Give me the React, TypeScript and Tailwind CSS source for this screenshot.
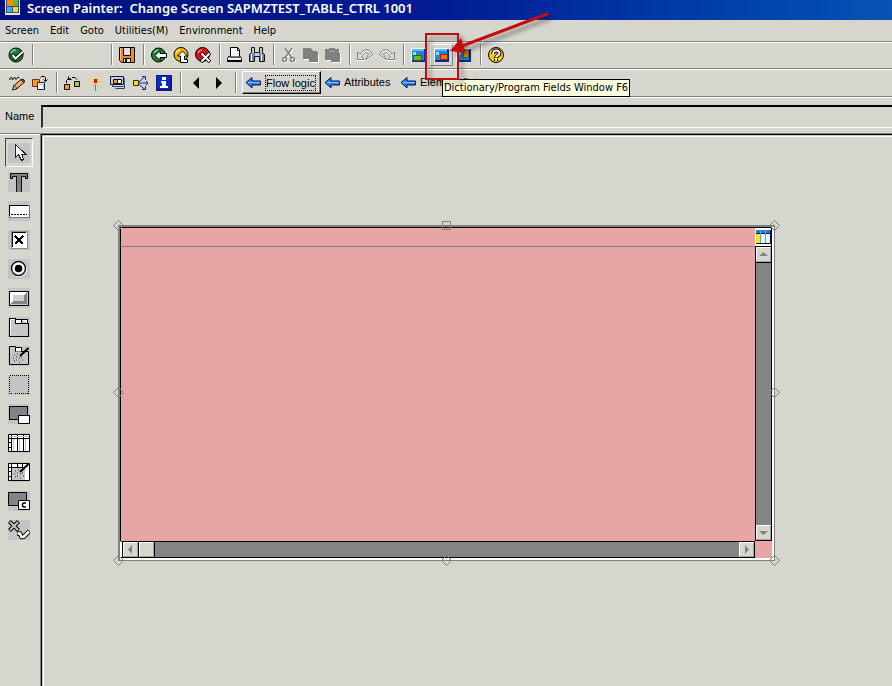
import type { ReactNode } from "react";

const tahoma = "font-['DejaVu_Sans_Condensed','Noto_Sans',sans-serif]";
const sans = "font-['Liberation_Sans',Arial,sans-serif]";

function Icon({ children, smooth = false }: { children: ReactNode; smooth?: boolean }) {
  return (
    <svg width="16" height="16" viewBox="0 0 16 16" fill="none" shapeRendering={smooth ? "auto" : "crispEdges"} className="shrink-0" aria-hidden="true">
      {children}
    </svg>
  );
}

function ToolButton({ label, wide = false, hot = false, children }: { label: string; wide?: boolean; hot?: boolean; children: ReactNode }) {
  const width = wide ? "w-[23px]" : "w-[22px]";
  const edge = hot ? "border border-t-white border-l-white border-r-[#808080] border-b-[#808080]" : "";
  return (
    <button type="button" aria-label={label} className={`flex h-[22px] shrink-0 items-center justify-center ${width} ${edge}`}>
      {children}
    </button>
  );
}

function Separator({ tight = false }: { tight?: boolean }) {
  return (
    <div
      className={`ml-[5px] h-[21px] w-[2px] shrink-0 border-r border-l border-l-[#808080] border-r-white ${tight ? "mr-[2px]" : "mr-[3px]"}`}
    />
  );
}

const Check = () => (
  <Icon smooth>
    <circle cx="8" cy="8" r="7" fill="#18803a" stroke="#000" />
    <path d="M3 6a5 5 0 0 1 5-3" stroke="#7fd08c" strokeWidth="1.5" />
    <path d="M4 7.500l3.500 4L14.500 5" stroke="#000" strokeWidth="4" />
    <path d="M4.500 8l3 3.500L14.500 5" stroke="#fff" strokeWidth="2" />
  </Icon>
);
const Save = () => (
  <Icon smooth>
    <path d="M.500 .500h15v15H2.500l-2-2z" fill="#f08a1c" stroke="#000" />
    <rect x="4.500" y=".500" width="7" height="8" fill="#eadcf0" stroke="#000" />
    <rect x="4.500" y="11.500" width="7" height="4" fill="#e8e8e8" stroke="#000" />
    <rect x="6" y="12" width="2" height="3" fill="#000" />
    <path d="M1 1h1v12H1z" fill="#ffc070" />
  </Icon>
);
const Back = () => (
  <Icon smooth>
    <circle cx="7.500" cy="8" r="7" fill="#18803a" stroke="#000" />
    <path d="M3 6a5 5 0 0 1 4-3" stroke="#7fd08c" strokeWidth="1.5" />
    <path d="M4 8.500l5-5v3h6.500v4H9v3z" fill="#fff" stroke="#000" />
  </Icon>
);
const Exit = () => (
  <Icon smooth>
    <circle cx="8" cy="7.500" r="7" fill="#f5b400" stroke="#000" />
    <path d="M3 6a5 5 0 0 1 4-3" stroke="#fff27a" strokeWidth="1.5" />
    <path d="M9.500 4l5 5h-3v3.500h3v3H7.500V9h-3z" fill="#fff" stroke="#000" />
  </Icon>
);
const Cancel = () => (
  <Icon smooth>
    <circle cx="7.500" cy="7.500" r="7" fill="#dc101c" stroke="#000" />
    <path d="M3 6a5 5 0 0 1 4-3" stroke="#ff8080" strokeWidth="1.5" />
    <path d="M6 6l9 9M15 6l-9 9" stroke="#000" strokeWidth="3.500" />
    <path d="M6.500 6.500l8 8M14.500 6.500l-8 8" stroke="#fff" strokeWidth="2" />
  </Icon>
);
const Print = () => (
  <Icon smooth>
    <path d="M3.500 9.500v-9h7l2 2v7z" fill="#fff" stroke="#000" />
    <path d="M10.500 .500v3h2" stroke="#000" />
    <path d="M3.500 9.500h-2l-1 2v3h14v-3l-1-2h-1" fill="#f2f2f2" stroke="#000" />
    <path d="M1 13h14v2H1z" fill="#000" />
    <path d="M3 10.500h10" stroke="#555" />
  </Icon>
);
const Find = () => (
  <Icon smooth>
    <path d="M2.500 .500h3v5h5v-5h3v5l2 2v7h-5v-5h-5v5h-5v-7l2-2z" fill="#7484a8" stroke="#111" />
    <path d="M2 7h1v7H2zM12 7h1v7h-1zM3.500 1h1v5h-1zM11.500 1h1v5h-1z" fill="#fff" />
    <path d="M6 6h4v3H6z" fill="#c4cae0" />
  </Icon>
);
const Cut = () => (
  <Icon smooth>
    <g stroke="#fff" transform="translate(1 1)">
      <path d="M4 1l7 10M11 1L4 11" strokeWidth="1.5" />
      <circle cx="3.500" cy="12.500" r="2" />
      <circle cx="11.500" cy="12.500" r="2" />
    </g>
    <g stroke="#808080">
      <path d="M4 1l7 10M11 1L4 11" strokeWidth="1.500" />
      <circle cx="3.500" cy="12.500" r="2" strokeWidth="1.5" />
      <circle cx="11.500" cy="12.500" r="2" strokeWidth="1.5" />
    </g>
  </Icon>
);
const Copy = () => (
  <Icon>
    <path d="M1 2h7l3 3h2l3 2v9H7v-3H1z" fill="#fff" />
    <path d="M0 1h7l3 3h3l2 2v9H6v-3H0z" fill="#808080" />
  </Icon>
);
const Paste = () => (
  <Icon>
    <path d="M1 3h14v4h1v9H7v-2H1z" fill="#fff" />
    <path d="M0 2h4V1h6v1h4v4h1v9H6v-2H0z" fill="#808080" />
    <path d="M4 4h6v1H4z" fill="#a8a8a8" />
  </Icon>
);
const undoShape = "M.500 5v7.500h7L5 10c1.500-4 5-5 6.500-3l-2.500 5.500L15.500 8C13.500 1 6 1 3 7.500z";
const Undo = ({ flip = false }: { flip?: boolean }) => (
  <Icon smooth>
    <g transform={flip ? "translate(16 0) scale(-1 1)" : undefined}>
      <path d={undoShape} transform="translate(0 1)" stroke="#fff" />
      <path d={undoShape} stroke="#808080" />
    </g>
  </Icon>
);
const Windows = ({ tone }: { tone: "green" | "orange" | "yellow" }) => (
  <Icon>
    <rect x="0" y="1" width="15" height="14" fill="#fff" />
    <rect x="1" y="2" width="14" height="13" fill="#082c94" />
    <rect x="1" y="2" width="12" height="11" fill="#1687e0" />
    <path d="M1 2h12v2H1z" fill="#62bcf8" />
    <path d="M2 5h3v3H2z" fill="#a0dcff" />
    {tone === "green" && <path d="M2 8h8v5H2z" fill="#7fb000" stroke="#356000" />}
    {tone === "orange" && <path d="M6 7h7v5H6z" fill="#ff6c10" stroke="#a02800" />}
    {tone === "yellow" && <path d="M7 3h5v7H7z" fill="#d5b800" stroke="#786000" />}
  </Icon>
);
const Help = () => (
  <Icon smooth>
    <circle cx="8" cy="8" r="7.500" fill="#ffc800" stroke="#000" />
    <path d="M3 6a6 6 0 0 1 3-3" stroke="#fff7a0" strokeWidth="1.5" />
    <path d="M5 7c0-5 7-4 6.500-.5C11.500 8.500 8 8 8 11M8 12v2" stroke="#000" strokeWidth="4" />
    <path d="M5 7c0-5 7-4 6.500-.5C11.500 8.500 8 8 8 10.500M8 12v1.800" stroke="#fff" strokeWidth="2" />
  </Icon>
);
const Pencil = () => (
  <Icon smooth>
    <path d="M.500 5l1-2.500h1l1 2.500 2-3 1.500 2.500 2-2.500 1.500 1" stroke="#111" />
    <path d="M4 14.500l1-4 7-6 3 3-7 6z" fill="#ffb050" stroke="#111" />
    <path d="M5 10.500l3 3-4.500 1.500z" fill="#fff" stroke="#111" />
    <path d="M12 4.500l3 3 .500-2-1.500-1.500z" fill="#4a5a9a" stroke="#222" />
  </Icon>
);
const OtherObject = () => (
  <Icon smooth>
    <path d="M.500 4.500h7v7h-7z" fill="#ff9c20" stroke="#703000" />
    <path d="M5.500 7.500h7v7h-7z" fill="#fff" stroke="#111d50" />
    <path d="M7 9.500h4.500v4" stroke="#a4b4d8" />
    <path d="M8.500 2.500l1-1h3l1 1v4M11.500 4.500l2 2 2-2" stroke="#000" />
  </Icon>
);
const Hierarchy = () => (
  <Icon smooth>
    <path d="M.500 9.500h5v5h-5z" fill="#ff9c20" stroke="#000" />
    <path d="M10.500 6.500h5v5h-5z" fill="#a5cc50" stroke="#000" />
    <path d="M2.500 8V5.500M2.500 5.500l2-2M4.500 3.500h2M8 2.500h3l2 2M4.500 1.500v3h3" stroke="#000" />
  </Icon>
);
const Wand = () => (
  <Icon smooth>
    <path d="M8.500 0v3M3 1.500L6 4.500M14 1.500l-3 3M1.500 6.500h4M11.500 6.500h4M3 12l3-3M14 12l-3-3" stroke="#ffe000" />
    <rect x="7" y="8" width="3" height="8" fill="#fff" stroke="#8090a0" strokeWidth=".500" />
    <rect x="7" y="4" width="3" height="4" fill="#e01010" />
    <path d="M8.500 9v7" stroke="#66789a" />
  </Icon>
);
const Where = () => (
  <Icon smooth>
    <path d="M.500 9.500v-8h13v8z" fill="#c8ccd8" stroke="#101c44" />
    <path d="M3.500 4.500h4v4h-4z" fill="#ff9c20" stroke="#000" />
    <path d="M7.500 4.500h4v4h-4z" fill="#fff" stroke="#000" />
    <path d="M2.500 9.500v2h11M5.500 13.500h9v-6" stroke="#303c64" />
    <path d="M14.500 3v7" stroke="#506088" />
  </Icon>
);
const Spread = () => (
  <Icon smooth>
    <path d="M.500 5.500h5v5h-5z" fill="#ffe000" stroke="#303000" />
    <path d="M6 8h9M13 6l2 2-2 2M6 7l6-5.500M9 1.500h3.500v3.500M6 9.500l6 5M9 14.500h3.500V11" stroke="#1028a8" />
  </Icon>
);
const Info = () => (
  <Icon>
    <rect x="0" y="0" width="16" height="16" fill="#101870" />
    <rect x="1" y="1" width="13" height="13" fill="#0828d8" />
    <path d="M6 2h4v3H6zM5 6h5v5h2v2H4v-2h2V8H5z" fill="#fff" />
  </Icon>
);
const Triangle = ({ right = false }: { right?: boolean }) => (
  <Icon smooth>
    <path d={right ? "M5 2v12l6-6z" : "M11 2v12L5 8z"} fill="#000" />
  </Icon>
);
const BlueArrow = () => (
  <Icon smooth>
    <path d="M1 7.500l6-5V6h8.500v4H7v3z" fill="#2b7fff" stroke="#001050" />
    <path d="M3 7.500h12" stroke="#7ec8ff" />
  </Icon>
);

const tools: { name: string; art: ReactNode }[] = [
  {
    name: "Pointer",
    art: <path d="M7.500 1.500v13l3-3 3 6 2-1-2-5.500h4z" fill="#fff" stroke="#222" />,
  },
  {
    name: "Text field",
    art: <path d="M2 1h17v5h-2V4h-4v16h-5V4H4v2H2z" fill="#808080" stroke="#111" />,
  },
  {
    name: "Input field",
    art: (
      <>
        <path d="M1 4h20v12H1z" fill="#fff" stroke="#777" />
        <path d="M1 15V4h19" stroke="#000" />
        <path d="M3 13h16" stroke="#000" strokeDasharray="2 1" />
      </>
    ),
  },
  {
    name: "Checkbox",
    art: (
      <>
        <path d="M3 1h16v17H3z" fill="#fff" stroke="#888" />
        <path d="M4 17V2h14" stroke="#000" />
        <path d="M7 6l8 8M15 6l-8 8" stroke="#000" strokeWidth="2" />
      </>
    ),
  },
  {
    name: "Radio button",
    art: (
      <g shapeRendering="auto">
        <circle cx="11" cy="10" r="7.500" fill="#fff" stroke="#fff" />
        <circle cx="10.500" cy="9.500" r="7" fill="#fff" stroke="#111" strokeWidth="1.500" />
        <circle cx="10.500" cy="9.500" r="3.800" fill="#000" />
      </g>
    ),
  },
  {
    name: "Pushbutton",
    art: (
      <>
        <path d="M1 3h19v14H1z" fill="#c6c6c6" stroke="#000" />
        <path d="M2 4h17l-3 3H5v7l-3 2z" fill="#fff" />
        <path d="M19 4v12H2l3-3h11V7z" fill="#848484" />
        <path d="M5 7h11v6H5z" fill="#d0d0d0" />
      </>
    ),
  },
  {
    name: "Tabstrip control",
    art: (
      <>
        <path d="M1 1h6v5h13v13H1z" fill="#c6c6c6" stroke="#000" />
        <path d="M7 6V2h6v4M13 2h6v4" fill="#fff" stroke="#000" />
        <path d="M2 18V2h5" stroke="#fff" />
      </>
    ),
  },
  {
    name: "Tabstrip wizard",
    art: (
      <g shapeRendering="auto">
        <path d="M1.500 .500h6v5h13v13h-19z" fill="#c6c6c6" stroke="#000" />
        <path d="M7.500 5.500v-4h6v4" fill="#fff" stroke="#000" />
        <path d="M20.500 2L12 10" stroke="#000" strokeWidth="2" />
        <path d="M6 9h1M6 15h1M8 11h1M8 14h1M11 12h1M11 16h1M14 14h1M13 11h1M9 8h1M5 12h1" stroke="#222" strokeWidth="1.200" />
      </g>
    ),
  },
  {
    name: "Box",
    art: <path d="M1.500 .5h19v18h-19z" stroke="#000" strokeDasharray="1 1" />,
  },
  {
    name: "Subscreen area",
    art: (
      <>
        <path d="M1 2h18v13H1z" fill="#848484" stroke="#000" />
        <path d="M10 11h11v8H10z" fill="#fff" stroke="#000" />
      </>
    ),
  },
  {
    name: "Table control",
    art: (
      <g shapeRendering="auto">
        <path d="M.500 1.500h21v17H.500z" fill="#fff" stroke="#000" />
        <path d="M0 5.500h21M3.500 1v17M9.500 1v17M15.500 1v17M0 9.500h3M0 14.500h3" stroke="#000" />
        <path d="M1 3.500h20M5.500 6v12M11.500 6v12M17.500 6v12" stroke="#c0c0c0" />
      </g>
    ),
  },
  {
    name: "Table control wizard",
    art: (
      <g shapeRendering="auto">
        <path d="M.500 1.500h21v17H.500z" fill="#fff" stroke="#000" />
        <path d="M0 5.500h15M3.500 1v17M9.500 1v5M14.500 1v5M0 9.500h3M0 14.500h3" stroke="#000" />
        <path d="M4 6h13v12H4z" fill="#c6c6c6" />
        <path d="M20.500 2L12 10" stroke="#000" strokeWidth="2" />
        <path d="M7 9h1M7 15h1M9 11h1M9 14h1M12 12h1M12 16h1M15 14h1M14 11h1M10 8h1M6 12h1" stroke="#222" strokeWidth="1.200" />
      </g>
    ),
  },
  {
    name: "Custom control",
    art: (
      <g shapeRendering="auto">
        <path d="M.500 1.500h18v13H.500z" fill="#848484" stroke="#000" />
        <path d="M10.500 9.500h11v9h-11z" fill="#fff" stroke="#000" />
        <path d="M18 12h-2.500l-1 1v2l1 1H18" stroke="#000" strokeWidth="1.500" />
      </g>
    ),
  },
  {
    name: "Status icon",
    art: (
      <g shapeRendering="auto">
        <path d="M1.500 1.500l9 9M10.500 1.500l-9 9" stroke="#000" strokeWidth="4" />
        <path d="M2 2l8 8M10 2l-8 8" stroke="#c6c6c6" strokeWidth="2" />
        <path d="M9 13.500h3l1.500 3.500h2l6-6" stroke="#000" strokeWidth="4.500" strokeLinejoin="round" />
        <path d="M9.500 13.500h2.500l1.500 3.500h2l5.500-5.500" stroke="#fff" strokeWidth="2.500" />
      </g>
    ),
  },
];

function Palette() {
  return (
    <div role="toolbar" aria-label="Element palette" className="flex w-10 shrink-0 flex-col border-t border-t-[#808080]">
      <div className="flex flex-col border-t border-t-white pt-[3px]">
        {tools.map((t, i) => (
          <button
            key={t.name}
            type="button"
            aria-label={t.name}
            aria-pressed={i === 0}
            className={`ml-[5px] flex h-[29px] w-[28px] items-center justify-center ${
              i === 0 ? "border border-t-[#404040] border-l-[#404040] border-r-white border-b-white" : ""
            }`}
          >
            <svg width="22" height="20" viewBox="0 0 22 20" fill="none" shapeRendering="crispEdges" className="bg-[#c4c4c4]" aria-hidden="true">
              {t.art}
            </svg>
          </button>
        ))}
      </div>
    </div>
  );
}

function ScrollArrow({ label, d }: { label: string; d: string }) {
  return (
    <button
      type="button"
      aria-label={label}
      className="flex h-[15px] w-[15px] shrink-0 items-center justify-center border border-t-white border-l-white border-r-[#a0a0a0] border-b-[#a0a0a0] bg-[#d6d6ce]"
    >
      <svg width="9" height="9" viewBox="0 0 9 9" aria-hidden="true">
        <path d={d} fill="#808080" />
      </svg>
    </button>
  );
}

function Handle({ place, square = false }: { place: string; square?: boolean }) {
  return (
    <svg width="11" height="11" viewBox="0 0 11 11" fill="none" stroke="#808080" className={`absolute ${place}`} aria-hidden="true">
      {square ? <path d="M1.500 1.500h8v8h-8z" /> : <path d="M5.500 .5l5 5-5 5-5-5z" />}
    </svg>
  );
}

function TableControl() {
  return (
    <div className="relative h-[336px] w-[657px] border-t-2 border-r border-b border-l-2 border-[#808080]">
      <div className="flex h-full border-r-2 border-b-2 border-white">
        <div className="flex min-w-0 flex-1 flex-col border-t border-t-black bg-[#e7a5a5]">
          <div className="h-[19px] shrink-0 border-b border-l border-b-[#808080] border-l-black" />
          <div className="flex-1 border-l border-l-black" />
          <div className="flex h-[17px] shrink-0 border-y border-r border-l-2 border-y-black border-r-black border-l-white bg-[#848484]">
            <div className="w-px bg-black" />
            <ScrollArrow label="Scroll left" d="M6 0v9L2 4.500z" />
            <div className="w-px bg-black" />
            <div className="w-[15px] border border-t-white border-l-white border-r-[#a0a0a0] border-b-[#a0a0a0] bg-[#d6d6ce]" />
            <div className="flex-1 border-l border-l-black" />
            <ScrollArrow label="Scroll right" d="M3 0v9l4-4.500z" />
          </div>
        </div>
        <div className="flex w-[17px] shrink-0 flex-col border-t border-t-black bg-[#e7a5a5]">
          <button type="button" aria-label="Table settings" className="flex h-[19px] shrink-0 items-center justify-center border-r border-b border-r-black border-b-black bg-white">
            <svg width="15" height="16" viewBox="0 0 15 16" shapeRendering="crispEdges" aria-hidden="true">
              <path d="M0 1h15v14H0z" fill="#07164a" />
              <path d="M0 1h14v3H0z" fill="#2380d0" />
              <path d="M0 5h4v9H0z" fill="#ffe400" />
              <path d="M5 5h4v9H5zM10 5h4v9h-4z" fill="#e8f4ff" />
              <path d="M4 1h1v13H4zM9 1h1v13H9z" fill="#5aa2d8" />
            </svg>
          </button>
          <div className="flex flex-1 flex-col border-r border-b border-l border-black bg-[#848484]">
            <ScrollArrow label="Scroll up" d="M0 6h9L4.500 2z" />
            <div className="flex-1 border-t border-t-black" />
            <ScrollArrow label="Scroll down" d="M0 3h9L4.500 7z" />
          </div>
          <div className="h-[17px] shrink-0" />
        </div>
      </div>
      <Handle place="-top-[7px] -left-[7px]" />
      <Handle place="-top-[7px] left-[321px]" square />
      <Handle place="-top-[7px] -right-[6px]" />
      <Handle place="top-[160px] -left-[7px]" />
      <Handle place="top-[160px] -right-[6px]" />
      <Handle place="-bottom-[6px] -left-[7px]" />
      <Handle place="-bottom-[6px] left-[321px]" />
      <Handle place="-bottom-[6px] -right-[6px]" />
    </div>
  );
}

export default function App() {
  return (
    <div className={`relative flex min-h-screen flex-col overflow-hidden bg-[#d6d6ce] text-[11px] text-black ${tahoma}`}>
      <header className="flex h-5 items-start gap-[7px] bg-linear-to-r from-[#00107b] via-[#001c94] to-[#0852b5] pl-[5px]">
        <svg width="15" height="15" viewBox="0 0 15 15" shapeRendering="crispEdges" aria-hidden="true">
          <path d="M0 0h15v15H0z" fill="#e4e8d8" />
          <path d="M1 0h13v13H1z" fill="#305080" />
          <path d="M2 0h6v6H2z" fill="#f88820" />
          <path d="M8 0h5v6H8z" fill="#70b818" />
          <path d="M2 7h5v5H2z" fill="#48a8e8" />
          <path d="M8 7h5v5H8z" fill="#ffd820" />
        </svg>
        <h1 className="text-[13px] leading-4 font-semibold whitespace-pre text-white font-['Noto_Sans','Open_Sans',sans-serif]">
          {"Screen Painter:  Change Screen SAPMZTEST_TABLE_CTRL 1001"}
        </h1>
      </header>

      <nav className="flex h-[22px] items-center gap-[11px] border-b border-b-[#808080] pt-px pl-[5px]">
        {["Screen", "Edit", "Goto", "Utilities(M)", "Environment", "Help"].map((m) => (
          <button key={m} type="button">
            {m}
          </button>
        ))}
      </nav>

      <div role="toolbar" aria-label="Standard" className="flex h-[27px] items-center border-t border-b border-t-white border-b-[#808080] pb-[2px] pl-[5px]">
        <ToolButton label="Enter"><Check /></ToolButton>
        <Separator />
        <div className="w-[69px] shrink-0" />
        <Separator />
        <ToolButton label="Save"><Save /></ToolButton>
        <Separator />
        <ToolButton label="Back"><Back /></ToolButton>
        <ToolButton label="Exit"><Exit /></ToolButton>
        <ToolButton label="Cancel"><Cancel /></ToolButton>
        <Separator />
        <ToolButton label="Print"><Print /></ToolButton>
        <ToolButton label="Find"><Find /></ToolButton>
        <Separator />
        <ToolButton label="Cut"><Cut /></ToolButton>
        <ToolButton label="Copy"><Copy /></ToolButton>
        <ToolButton label="Paste"><Paste /></ToolButton>
        <Separator />
        <ToolButton label="Undo"><Undo /></ToolButton>
        <ToolButton label="Redo"><Undo flip /></ToolButton>
        <Separator />
        <ToolButton label="Attributes window"><Windows tone="green" /></ToolButton>
        <ToolButton label="Dictionary/Program fields window" wide hot><Windows tone="orange" /></ToolButton>
        <ToolButton label="Error log window"><Windows tone="yellow" /></ToolButton>
        <Separator />
        <ToolButton label="Help"><Help /></ToolButton>
      </div>

      <div role="toolbar" aria-label="Application" className={`flex h-7 items-center border-t border-b border-t-white border-b-[#808080] pb-px pl-[5px] ${sans}`}>
        <ToolButton wide label="Display or change"><Pencil /></ToolButton>
        <ToolButton wide label="Other object"><OtherObject /></ToolButton>
        <Separator tight />
        <ToolButton wide label="Check"><Hierarchy /></ToolButton>
        <ToolButton wide label="Activate"><Wand /></ToolButton>
        <ToolButton wide label="Where-used list"><Where /></ToolButton>
        <ToolButton wide label="Display object list"><Spread /></ToolButton>
        <ToolButton wide label="Information"><Info /></ToolButton>
        <Separator tight />
        <ToolButton wide label="Previous"><Triangle /></ToolButton>
        <ToolButton wide label="Next"><Triangle right /></ToolButton>
        <Separator tight />
        <button
          type="button"
          className="mx-[3px] flex h-[23px] w-[79px] shrink-0 items-center gap-1 border border-t-white border-l-white border-r-black border-b-black pl-[2px] shadow-[inset_-1px_-1px_0_#808080]"
        >
          <BlueArrow />
          <span className="border border-dotted border-black leading-[14px] whitespace-nowrap">Flow logic</span>
        </button>
        <button type="button" className="flex w-[76px] shrink-0 items-center gap-1">
          <BlueArrow />
          Attributes
        </button>
        <button type="button" className="flex shrink-0 items-center gap-1 whitespace-nowrap">
          <BlueArrow />
          Element list
        </button>
      </div>

      <div className={`flex h-9 items-center border-t border-t-white pt-[2px] pl-[5px] ${sans}`}>
        <label htmlFor="element-name" className="w-9 shrink-0">
          Name
        </label>
        <input
          id="element-name"
          type="text"
          className="h-[23px] min-w-0 flex-1 border-t-2 border-b border-l-2 border-t-black border-b-white border-l-[#303030] bg-transparent px-1 outline-none"
        />
      </div>

      <div className="flex flex-1">
        <Palette />
        <main className="flex min-w-0 flex-1 border-t border-l border-[#808080]">
          <div className="flex flex-1 border-t border-l border-black">
            <div className="flex flex-1 border-t border-l border-[#c8c8c4]">
              <div className="flex-1 border-t border-l border-white pt-[88px] pl-[74px]">
                <TableControl />
              </div>
            </div>
          </div>
        </main>
      </div>

      <div
        role="tooltip"
        className="absolute top-[79px] left-[442px] flex h-[18px] items-center border border-black bg-[#ffffe1] px-px whitespace-nowrap"
      >
        Dictionary/Program Fields Window F6
      </div>

      <svg width="140" height="90" viewBox="0 0 140 90" fill="none" className="pointer-events-none absolute top-[5px] left-[422px]" aria-hidden="true">
        <defs>
          <filter id="soft" x="-20%" y="-20%" width="150%" height="150%">
            <feDropShadow dx="4" dy="4" stdDeviation="2" floodColor="#000" floodOpacity="0.4" />
          </filter>
        </defs>
        <g filter="url(#soft)">
          <rect x="4" y="29" width="32" height="45" stroke="#c00c10" strokeWidth="2" />
          <path d="M125 9L40 41" stroke="#c00c10" strokeWidth="3" strokeLinecap="round" />
          <path d="M28 46l11-13 5 15z" fill="#c00c10" />
        </g>
      </svg>
    </div>
  );
}
